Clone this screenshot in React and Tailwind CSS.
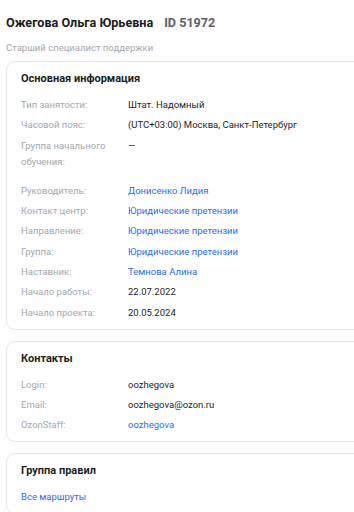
import React from 'react';

const mainRows = [
  { label: 'Тип занятости:', value: 'Штат. Надомный' },
  { label: 'Часовой пояс:', value: '(UTC+03:00) Москва, Санкт-Петербург' },
  { label: 'Группа начального обучения:', value: '—', extra: true },
  { label: 'Руководитель:', value: 'Донисенко Лидия', link: true },
  { label: 'Контакт центр:', value: 'Юридические претензии', link: true },
  { label: 'Направление:', value: 'Юридические претензии', link: true },
  { label: 'Группа:', value: 'Юридические претензии', link: true },
  { label: 'Наставник:', value: 'Темнова Алина', link: true },
  { label: 'Начало работы:', value: '22.07.2022' },
  { label: 'Начало проекта:', value: '20.05.2024' },
];

const contactRows = [
  { label: 'Login:', value: 'oozhegova' },
  { label: 'Email:', value: 'oozhegova@ozon.ru' },
  { label: 'OzonStaff:', value: 'oozhegova', link: true },
];

function Row({ label, value, link, extra }) {
  return (
    <div className={`flex text-[9.5px] leading-4 ${extra ? 'mb-[9px]' : ''}`}>
      <div className="w-[107px] shrink-0 pr-4 text-[#a3a7ae]">{label}</div>
      <div className={link ? 'text-[#2b6cf2]' : 'text-[#1f2329]'}>{value}</div>
    </div>
  );
}

function Card({ title, children }) {
  return (
    <div className="w-[420px] rounded-[9px] border border-[#e3e8ee] bg-white pl-[14px] pt-[7px] pb-2">
      <div className="mb-[8px] text-[11px] font-bold leading-5 text-[#1d1f23]">{title}</div>
      <div className="flex flex-col gap-[4.3px]">{children}</div>
    </div>
  );
}

export default function App() {
  return (
    <div
      className="h-[512px] w-[354px] overflow-hidden bg-white pl-[6px]"
      style={{ fontFamily: 'Roboto, "Noto Sans", sans-serif' }}
    >
      <div className="flex items-baseline gap-[11px] pt-[13px] text-[12.6px] font-bold leading-5">
        <span className="text-[#1a1c20]">Ожегова Ольга Юрьевна</span>
        <span className="text-[#5c6068]">ID 51972</span>
      </div>
      <div className="mt-[7px] text-[9.5px] leading-4 text-[#a3a7ae]">Старший специалист поддержки</div>

      <div className="mt-[5px] flex flex-col gap-[11px]">
        <Card title="Основная информация">
          {mainRows.map((r) => (
            <Row key={r.label} {...r} />
          ))}
        </Card>
        <Card title="Контакты">
          {contactRows.map((r) => (
            <Row key={r.label} {...r} />
          ))}
        </Card>
        <Card title="Группа правил">
          <div className="text-[9.5px] leading-4 text-[#2b6cf2]">Все маршруты</div>
        </Card>
      </div>
    </div>
  );
}
